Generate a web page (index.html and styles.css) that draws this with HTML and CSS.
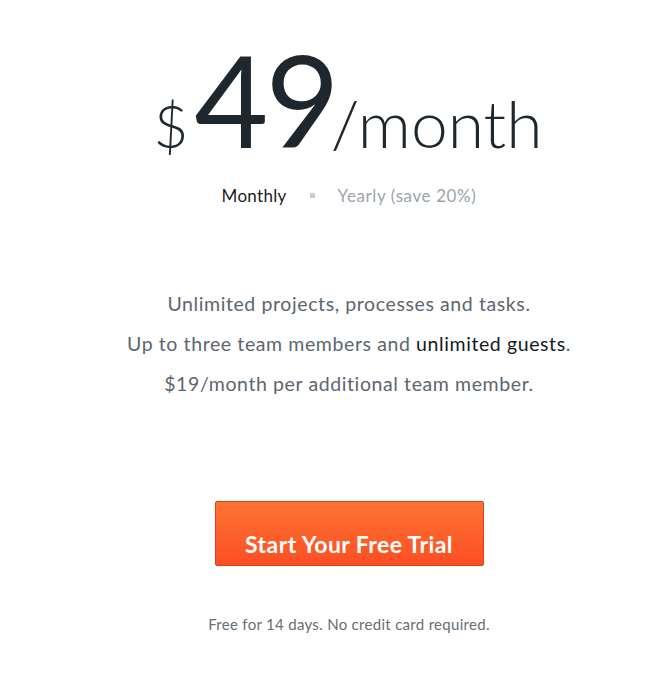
FILE: index.html
```html
<!DOCTYPE html>
<html>
<head>
<meta charset="utf-8">
<link rel="stylesheet" href="styles.css">
</head>
<body>
<main class="pricing">
  <div class="price">
    <span class="currency">$</span><span class="amount">49</span><span class="period">/month</span>
  </div>
  <div class="toggle">
    <span class="opt active">Monthly</span>
    <span class="dot"></span>
    <span class="opt">Yearly (save 20%)</span>
  </div>
  <ul class="features">
    <li>Unlimited projects, processes and tasks.</li>
    <li>Up to three team members and <strong>unlimited guests</strong>.</li>
    <li>$19/month per additional team member.</li>
  </ul>
  <a class="cta" href="#">Start Your Free Trial</a>
  <p class="note">Free for 14 days. No credit card required.</p>
</main>
</body>
</html>
```
FILE: styles.css
```css
html, body { margin: 0; padding: 0; background: #fff; }
body { font-family: "Lato", "Open Sans", sans-serif; }
.pricing {
  display: flex;
  flex-direction: column;
  align-items: center;
  padding-top: 35px;
  padding-left: 44px;
}
.price {
  display: flex;
  align-items: baseline;
  color: #1e272e;
  line-height: 1;
  margin-left: -2px;
}
.currency { font-size: 60px; font-weight: 300; margin-right: 6px; }
.amount { font-size: 128px; font-weight: 400; letter-spacing: -3px; margin-right: -6px; }
.period { font-size: 66px; font-weight: 300; }
.toggle {
  display: flex;
  align-items: center;
  gap: 23px;
  margin-top: 22px;
  font-size: 17px;
  letter-spacing: 0.6px;
  color: #9ba4af;
}
.opt.active { color: #1a1d21; letter-spacing: 0.3px; }
.dot { width: 5px; height: 5px; background: #c7ccd2; }
.features {
  list-style: none;
  margin: 78px 0 0;
  padding: 0;
  text-align: center;
  font-size: 19.5px;
  letter-spacing: 0.6px;
  color: #5c6670;
  line-height: 40px;
}
.features strong { font-weight: 400; color: #15191d; }
.cta {
  box-sizing: border-box;
  margin-top: 97px;
  width: 269px;
  height: 65px;
  display: flex;
  justify-content: center;
  padding-top: 31px;
  line-height: 22px;
  border: 1px solid #d9401b;
  border-radius: 2px;
  background: linear-gradient(#fe7332, #fc4f24);
  color: #fff;
  font-size: 23px;
  font-weight: 700;
  letter-spacing: 0.4px;
  text-decoration: none;
}
.note {
  margin: 49px 0 0;
  font-size: 15px;
  letter-spacing: 0.3px;
  color: #666d73;
}
```
